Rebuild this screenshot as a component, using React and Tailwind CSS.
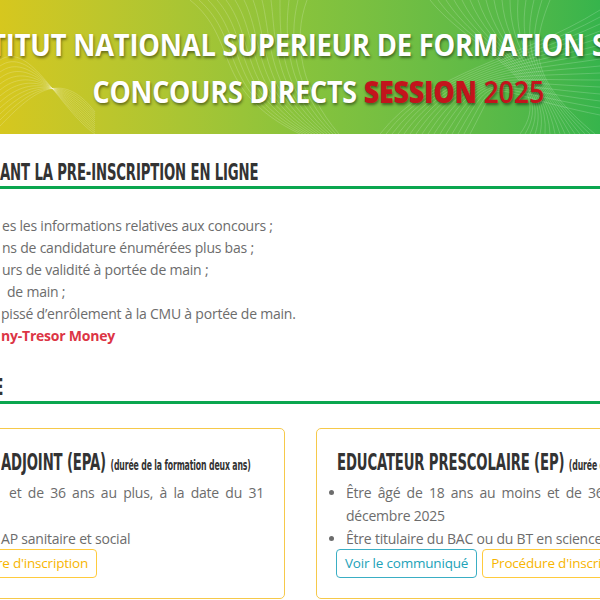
const heading = "font-['DejaVu_Sans_Condensed','Liberation_Sans',sans-serif] font-bold text-[#333]";
const squeeze = "inline-block origin-left scale-x-[0.64] whitespace-nowrap";

function Waves() {
  const left = Array.from({ length: 12 }, (_, i) => i);
  const mid = Array.from({ length: 14 }, (_, i) => i);
  const right = Array.from({ length: 16 }, (_, i) => i);
  return (
    <svg className="absolute inset-0 h-full w-full" viewBox="0 0 600 134" preserveAspectRatio="none">
      <g stroke="#ffffff" strokeOpacity="0.3" strokeWidth="0.6" fill="none">
        {left.map((i) => (
          <path key={"l" + i} d={`M0 ${60 + i * 6} C 30 ${40 + i * 5}, 60 ${110 - i * 4}, 95 ${134 - i * 2}`} />
        ))}
        {mid.map((i) => (
          <path key={"m" + i} d={`M${190 + i * 9} 0 C ${240 + i * 4} 40, ${210 + i * 7} 90, ${300 + i * 3} 134`} />
        ))}
        {right.map((i) => (
          <path key={"r" + i} d={`M${380 + i * 6} 134 C ${430 + i * 5} 70, ${520 - i * 3} ${60 + i * 2}, 600 ${10 + i * 7}`} />
        ))}
        {right.map((i) => (
          <path key={"s" + i} d={`M${430 + i * 8} 0 C ${470 + i * 4} 50, ${560 - i * 2} 80, ${520 + i * 5} 134`} />
        ))}
      </g>
    </svg>
  );
}

function Banner() {
  const title = "font-['Open_Sans',sans-serif] font-bold text-[30px] leading-[36px] whitespace-nowrap text-white [text-shadow:1px_2px_3px_rgba(0,0,0,0.45)]";
  return (
    <div className="relative h-[134px] overflow-hidden bg-linear-to-r from-[#d6c71e] via-[#88c33c] to-[#36b44c]">
      <Waves />
      <div className="relative flex flex-col items-center pt-[27px]">
        <div className="flex w-full justify-center pl-[48px]">
          <span className={title + " inline-block scale-x-[0.91]"}>INSTITUT NATIONAL SUPERIEUR DE FORMATION SOCIALE</span>
        </div>
        <div className="mt-[11px] flex w-full justify-center pl-[36px]">
          <span className={title + " inline-block scale-x-[0.895]"}>
            CONCOURS DIRECTS <span className="text-[#c3141c] font-extrabold">SESSION</span>{" "}
            <span className="text-[#c3141c] font-semibold">2025</span>
          </span>
        </div>
      </div>
    </div>
  );
}

function SectionTitle({ children, className = "" }) {
  return (
    <h2 className={heading + " border-b-[3px] border-[#0aa64f] text-[23px] leading-[24px] " + className}>
      <span className={squeeze}>{children}</span>
    </h2>
  );
}

function Button({ tone, className = "", children }) {
  const tones = {
    info: "border-[#3aaec4] text-[#22a2b8]",
    warn: "border-[#ffcb3d] text-[#f7b500]",
  };
  return (
    <span className={"inline-flex h-[29px] items-center whitespace-nowrap rounded-[4px] border px-[8px] text-[13.5px] tracking-[-0.2px] " + tones[tone] + " " + className}>
      {children}
    </span>
  );
}

export default function App() {
  const items = [
    { text: "es les informations relatives aux concours ;", pad: "pl-[2px]" },
    { text: "ns de candidature énumérées plus bas ;", pad: "pl-[2px]" },
    { text: "urs de validité à portée de main ;", pad: "pl-[2px]" },
    { text: "de main ;", pad: "pl-[7px]" },
    { text: "pissé d’enrôlement à la CMU à portée de main.", pad: "pl-[1px]" },
  ];
  return (
    <div className="w-[600px] h-[600px] overflow-hidden bg-white font-['Open_Sans',sans-serif] text-[14px] tracking-[-0.22px] text-[#6c6c6c]">
      <Banner />

      <SectionTitle className="mt-[26px] pb-[2px]">ANT LA PRE-INSCRIPTION EN LIGNE</SectionTitle>

      <ul className="mt-[26px] leading-[22px]">
        {items.map((it) => (
          <li key={it.text} className={"whitespace-nowrap " + it.pad}>{it.text}</li>
        ))}
        <li className="whitespace-nowrap pl-[1px] font-bold text-[#dc3545]">ny-Tresor Money</li>
      </ul>

      <SectionTitle className="mt-[28px] pb-[2px]">
        <span className="-ml-[9px]">E</span>
      </SectionTitle>

      <div className="mt-[24px] flex gap-[31px]">
        {/* left card, mostly off screen */}
        <div className="-ml-[30px] h-[171px] w-[315px] shrink-0 rounded-[5px] border border-[#f6c94a] pl-[30px] pt-[19px]">
          <div className={heading + " text-[23px] leading-[28px]"}>
            <span className={squeeze}>
              ADJOINT (EPA) <span className="text-[13.5px]">(durée de la formation deux ans)</span>
            </span>
          </div>
          <div className="mt-[2px] leading-[23px]">
            <p className="w-[263px] pl-[8px] text-justify [text-align-last:justify]">et de 36 ans au plus, à la date du 31</p>
            <p className="h-[23px]"></p>
            <p className="whitespace-nowrap">AP sanitaire et social</p>
          </div>
          <Button tone="warn" className="-ml-[16px] -mt-[1px] pl-[11px]">re d'inscription</Button>
        </div>

        {/* right card */}
        <div className="h-[171px] w-[508px] shrink-0 rounded-[5px] border border-[#f6c94a] pl-[20px] pr-[22px] pt-[19px]">
          <div className={heading + " text-[23px] leading-[28px]"}>
            <span className={squeeze}>
              EDUCATEUR PRESCOLAIRE (EP) <span className="text-[13.5px]">(durée de la formation deux ans)</span>
            </span>
          </div>
          <ul className="mt-[2px] list-disc pl-[9px] leading-[23px]">
            <li className="text-justify">Être âgé de 18 ans au moins et de 36 ans au plus, à la date du 31 décembre 2025</li>
            <li className="whitespace-nowrap">Être titulaire du BAC ou du BT en sciences sociales</li>
          </ul>
          <div className="-mt-[1px] flex gap-[5px]">
            <Button tone="info" className="-ml-[1px]">Voir le communiqué</Button>
            <Button tone="warn">Procédure d'inscription</Button>
          </div>
        </div>
      </div>
    </div>
  );
}
